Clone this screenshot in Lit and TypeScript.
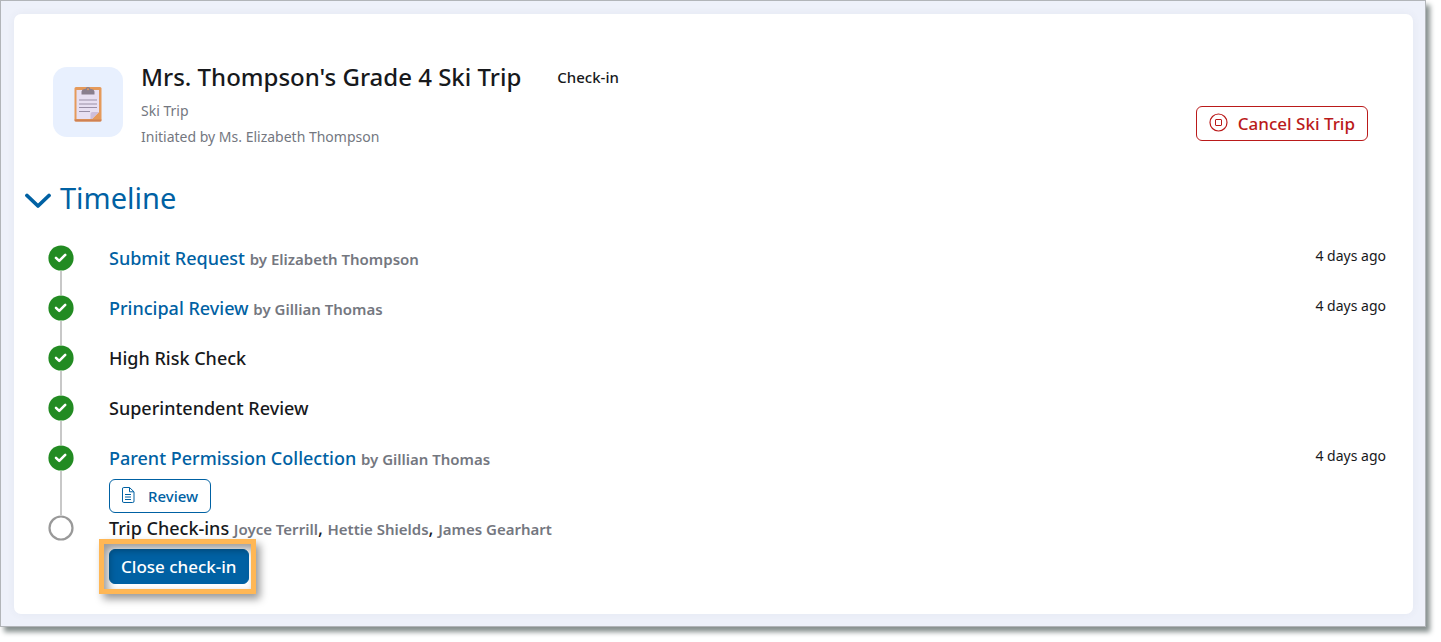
import { LitElement, html, css, svg, nothing } from "lit";
import { customElement, property, state } from "lit/decorators.js";
import { classMap } from "lit/directives/class-map.js";

interface Step {
  name: string;
  done: boolean;
  link?: boolean;
  by?: string;
  people?: string[];
  when?: string;
  action?: "review" | "close";
}

const STEPS: Step[] = [
  { name: "Submit Request", done: true, link: true, by: "Elizabeth Thompson", when: "4 days ago" },
  { name: "Principal Review", done: true, link: true, by: "Gillian Thomas", when: "4 days ago" },
  { name: "High Risk Check", done: true },
  { name: "Superintendent Review", done: true },
  {
    name: "Parent Permission Collection",
    done: true,
    link: true,
    by: "Gillian Thomas",
    when: "4 days ago",
    action: "review",
  },
  {
    name: "Trip Check-ins",
    done: false,
    people: ["Joyce Terrill", "Hettie Shields", "James Gearhart"],
    action: "close",
  },
];

const checkMark = svg`<path d="M8 12.900l3.200 3 6-6" fill="none" stroke="#fff" stroke-width="2.600" stroke-linecap="round" stroke-linejoin="round"/>`;

@customElement("timeline-step")
export class TimelineStep extends LitElement {
  @property({ attribute: false }) step!: Step;
  @property({ type: Boolean }) last = false;

  static styles = css`
    :host {
      display: grid;
      grid-template-columns: 26px 1fr auto;
      column-gap: 35px;
      color: #17191c;
    }
    .rail {
      display: flex;
      flex-direction: column;
      align-items: center;
    }
    .marker {
      display: block;
      flex: none;
      width: 26px;
      height: 26px;
    }
    .line {
      flex: 1;
      width: 2px;
      background: #c8c8c8;
    }
    .body {
      min-height: 50px;
      padding-bottom: 2px;
      box-sizing: border-box;
    }
    .last .body {
      min-height: 0;
    }
    .title {
      margin: 0;
      font-size: 18px;
      line-height: 26px;
      font-weight: 500;
    }
    a {
      color: #0061a3;
      text-decoration: none;
    }
    .by {
      font-size: 15px;
      font-weight: 600;
      color: #74777f;
    }
    time {
      font-size: 14px;
      line-height: 22px;
    }
    button {
      display: inline-flex;
      align-items: center;
      box-sizing: border-box;
      border-radius: 6px;
      border: 1px solid #0061a3;
      font-family: inherit;
      font-weight: 500;
      cursor: pointer;
    }
    .review {
      height: 34px;
      padding: 0 12px;
      gap: 12px;
      background: #fff;
      color: #0061a3;
      font-size: 15px;
    }
    .close {
      height: 35px;
      padding: 0 11px;
      background: #0061a3;
      color: #fff;
      font-size: 17px;
    }
    .callout {
      position: relative;
      display: inline-flex;
    }
    .callout::after {
      content: "";
      position: absolute;
      inset: -10px -7px -10px -10px;
      border: 5px solid #ffb755;
      box-shadow: 4px 5px 8px rgba(0, 0, 0, 0.4), inset 4px 5px 8px rgba(0, 0, 0, 0.4);
      pointer-events: none;
    }
    .actions {
      display: flex;
      margin-top: 7px;
    }
  `;

  private renderAction() {
    switch (this.step.action) {
      case "review":
        return html`<div class="actions">
          <button class="review" type="button">
            <svg width="14" height="18" viewBox="0 0 14 18" fill="none" stroke="#0061a3" aria-hidden="true">
              <path d="M.5 2a1.300 1.300 0 0 1 1.300-1.500h5.700l4.500 4.300v9.200a1.300 1.300 0 0 1-1.300 1.500h-8.900a1.300 1.300 0 0 1-1.300-1.500z" />
              <path d="M7.500 .5v4.300h4.500M3 7.500h6M3 10h6M3 12.500h6" />
            </svg>
            Review
          </button>
        </div>`;
      case "close":
        return html`<div class="actions">
          <span class="callout"><button class="close" type="button">Close check-in</button></span>
        </div>`;
      default:
        return nothing;
    }
  }

  render() {
    const s = this.step;
    return html`
      <div class="rail">
        <svg class="marker" viewBox="0 0 26 26" role="img" aria-label=${s.done ? "Completed" : "Pending"}>
          ${s.done
            ? svg`<circle cx="13" cy="13" r="12.600" fill="#228b22"/>${checkMark}`
            : svg`<circle cx="13" cy="13" r="11.500" fill="#fff" stroke="#999" stroke-width="2.200"/>`}
        </svg>
        ${this.last ? nothing : html`<div class="line"></div>`}
      </div>
      <div class=${classMap({ last: this.last })}>
        <div class="body">
          <p class="title">
            ${s.link ? html`<a href="#">${s.name}</a>` : s.name}
            ${s.by ? html`<span class="by">by ${s.by}</span>` : nothing}
            ${s.people?.map((p, i) => html`${i ? ", " : nothing}<span class="by">${p}</span>`)}
          </p>
          ${this.renderAction()}
        </div>
      </div>
      ${s.when ? html`<time>${s.when}</time>` : nothing}
    `;
  }
}

@customElement("app-root")
export class AppRoot extends LitElement {
  @state() private open = true;

  static styles = css`
    :host {
      display: block;
      padding: 0 15px 15px 0;
      background: #fff;
      font-family: "Segoe UI", "Noto Sans", "Open Sans", sans-serif;
      color: #17191c;
    }
    .frame {
      border: 1px solid #b2b5b9;
      background: #eef1fa;
      padding: 13px 12px 12px 13px;
      box-shadow: 4px 5px 5px #87908f;
    }
    .card {
      background: #fff;
      border-radius: 7px;
      padding: 48px 27px 28px 11px;
      box-shadow: 0 0 8px rgba(60, 80, 100, 0.06);
    }
    header {
      display: flex;
      align-items: flex-start;
      padding: 0 18px 0 28px;
    }
    .tile {
      flex: none;
      display: flex;
      align-items: center;
      justify-content: center;
      width: 70px;
      height: 66px;
      padding-top: 4px;
      margin: 5px 18px 0 0;
      border-radius: 14px;
      background: #e8f0fe;
    }
    .info {
      flex: 1;
    }
    .heading {
      display: flex;
      align-items: center;
      gap: 36px;
      margin-bottom: 6px;
    }
    h1 {
      margin: 0;
      font-size: 24px;
      line-height: 30px;
      font-weight: 500;
    }
    .status {
      font-size: 15px;
      font-weight: 500;
    }
    .meta {
      margin: 0;
      font-size: 14px;
      line-height: 26px;
      color: #74777f;
    }
    .cancel {
      display: inline-flex;
      align-items: center;
      gap: 10px;
      box-sizing: border-box;
      height: 35px;
      margin-top: 44px;
      padding: 0 12px;
      border: 1px solid #ba1a1a;
      border-radius: 6px;
      background: #fff;
      color: #ba1a1a;
      font-family: inherit;
      font-size: 17px;
      font-weight: 500;
      cursor: pointer;
    }
    h2 {
      margin: 28px 0 26px;
      font-size: 29px;
      line-height: 40px;
      font-weight: 400;
    }
    .toggle {
      display: inline-flex;
      align-items: center;
      gap: 8px;
      padding: 0;
      border: 0;
      background: none;
      color: #0061a3;
      font: inherit;
      cursor: pointer;
    }
    .steps {
      padding-left: 23px;
    }
  `;

  render() {
    return html`
      <div class="frame">
        <main class="card">
          <header>
            <div class="tile">
              <svg width="28" height="36" viewBox="0 0 28 36" aria-hidden="true">
                <rect x="0.500" y="1" width="27" height="34.500" rx="1.500" fill="#e59a5b" />
                <path d="M.5 33.500h27v.5a1.500 1.500 0 0 1-1.500 1.500h-24a1.500 1.500 0 0 1-1.500-1.500z" fill="#cf8153" />
                <path d="M2.500 4h22.500v22l-7 7h-15.500z" fill="#e8e0f2" />
                <path d="M25 26h-6.500a2 2 0 0 0-2 2v5h1.500z" fill="#cdbedb" />
                <path d="M7.500 8.500v-3a3 3 0 0 1 3-2.500h1a2.600 2.600 0 0 1 5 0h1a3 3 0 0 1 3 2.500v3z" fill="#8a7f8e" />
                <circle cx="14" cy="3.200" r="1" fill="#e59a5b" />
                <path d="M5 14h18M5 18h18M5 21.500h18M5 25.500h11" stroke="#998fa6" stroke-width="1.200" />
              </svg>
            </div>
            <div class="info">
              <div class="heading">
                <h1>Mrs. Thompson's Grade 4 Ski Trip</h1>
                <span class="status">Check-in</span>
              </div>
              <p class="meta">Ski Trip</p>
              <p class="meta">Initiated by Ms. Elizabeth Thompson</p>
            </div>
            <button class="cancel" type="button">
              <svg width="19" height="21" viewBox="0 0 19 21" fill="none" stroke="#ba1a1a" aria-hidden="true">
                <circle cx="9.500" cy="9.500" r="8.500" stroke-width="1.200" />
                <rect x="6.500" y="6.500" width="6" height="6" rx="0.500" />
              </svg>
              Cancel Ski Trip
            </button>
          </header>
          <h2>
            <button
              class="toggle"
              type="button"
              aria-expanded=${this.open}
              @click=${() => (this.open = !this.open)}
            >
              <svg width="27" height="23" viewBox="0 0 27 23" fill="none" aria-hidden="true">
                <path d="M2 8.500L13 19L24 8.500" stroke="#0061a3" stroke-width="3.800" stroke-linecap="round" stroke-linejoin="round" />
              </svg>
              Timeline
            </button>
          </h2>
          ${this.open
            ? html`<section class="steps">
                ${STEPS.map(
                  (s, i) => html`<timeline-step .step=${s} ?last=${i === STEPS.length - 1}></timeline-step>`
                )}
              </section>`
            : nothing}
        </main>
      </div>
    `;
  }
}
